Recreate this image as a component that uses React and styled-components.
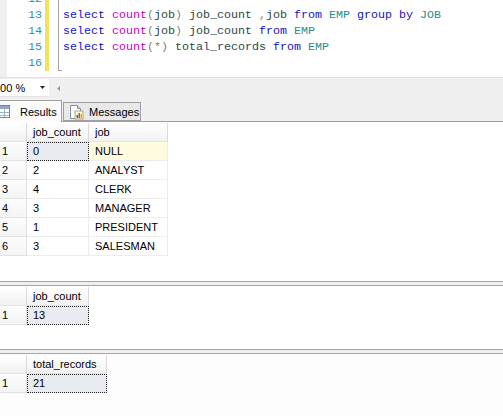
import styled, { createGlobalStyle } from "styled-components";

const GlobalStyle = createGlobalStyle`
  html, body {
    margin: 0;
    padding: 0;
    background: #ffffff;
    overflow: hidden;
  }
  * {
    box-sizing: border-box;
  }
`;

const tokenColors = {
  kw: "#1414c4",
  fn: "#cc00cc",
  op: "#808080",
  id: "#2c4a4a",
  tbl: "#2b8a8a",
};

const codeLines = [
  { n: 12, tokens: [] },
  {
    n: 13,
    tokens: [
      ["kw", "select"], ["", " "], ["fn", "count"], ["op", "("], ["id", "job"], ["op", ")"],
      ["", " "], ["id", "job_count"], ["", " "], ["op", ","], ["id", "job"], ["", " "],
      ["kw", "from"], ["", " "], ["tbl", "EMP"], ["", " "], ["kw", "group"], ["", " "],
      ["kw", "by"], ["", " "], ["tbl", "JOB"],
    ],
  },
  {
    n: 14,
    tokens: [
      ["kw", "select"], ["", " "], ["fn", "count"], ["op", "("], ["id", "job"], ["op", ")"],
      ["", " "], ["id", "job_count"], ["", " "], ["kw", "from"], ["", " "], ["tbl", "EMP"],
    ],
  },
  {
    n: 15,
    tokens: [
      ["kw", "select"], ["", " "], ["fn", "count"], ["op", "(*)"], ["", " "],
      ["id", "total_records"], ["", " "], ["kw", "from"], ["", " "], ["tbl", "EMP"],
    ],
  },
  { n: 16, tokens: [] },
];

const jobRows = [
  ["1", "0", "NULL"],
  ["2", "2", "ANALYST"],
  ["3", "4", "CLERK"],
  ["4", "3", "MANAGER"],
  ["5", "1", "PRESIDENT"],
  ["6", "3", "SALESMAN"],
];

function ResultsIcon() {
  return (
    <svg width="16" height="13" viewBox="0 0 16 13">
      <rect x="0.5" y="0.5" width="15" height="12" fill="#ffffff" stroke="#6f86a8" />
      <rect x="1" y="1" width="14" height="3" fill="#8ea6c8" />
      <path d="M1 7.5H15M1 10.5H15M5.5 4V12M10.5 4V12" stroke="#9fb0c8" />
    </svg>
  );
}

function MessagesIcon() {
  return (
    <svg width="16" height="16" viewBox="0 0 16 16">
      <path d="M2.5 1.5H9.5L12.5 4.5V14.5H2.5Z" fill="#ffffff" stroke="#7d8ea6" />
      <path d="M9.5 1.5V4.5H12.5" fill="#dfe6ef" stroke="#7d8ea6" />
      <rect x="7" y="7" width="8" height="8" fill="#fff7d8" stroke="#b9a86a" />
      <rect x="8.5" y="11" width="1.5" height="3" fill="#d93a2b" />
      <rect x="10.5" y="9" width="1.5" height="5" fill="#3a6fd0" />
      <rect x="12.5" y="10" width="1.5" height="4" fill="#e0b020" />
    </svg>
  );
}

function DataGrid({ columns, header, rows, selected, nullCell }) {
  return (
    <Grid $columns={columns}>
      <HeadCell />
      {header.map((h) => (
        <HeadCell key={h}>{h}</HeadCell>
      ))}
      {rows.map((row, r) =>
        row.map((value, c) =>
          c === 0 ? (
            <RowHead key={r + "-" + c}>{value}</RowHead>
          ) : (
            <Cell
              key={r + "-" + c}
              $selected={selected && selected[0] === r && selected[1] === c}
              $null={nullCell && value === "NULL"}
            >
              {value}
            </Cell>
          )
        )
      )}
    </Grid>
  );
}

export default function App() {
  return (
    <>
      <GlobalStyle />
      <Window>
        <Editor>
          <SelectionMargin />
          <LineNumbers>
            {codeLines.map((l) => (
              <Line key={l.n}>{l.n}</Line>
            ))}
          </LineNumbers>
          <ChangeBar />
          <OutlineColumn>
            <OutlineLine />
          </OutlineColumn>
          <Code>
            {codeLines.map((l) => (
              <Line key={l.n}>
                {l.tokens.map(([kind, text], i) => (
                  <Token key={i} $kind={kind}>
                    {text}
                  </Token>
                ))}
              </Line>
            ))}
          </Code>
        </Editor>

        <Toolbar>
          <ZoomBox>
            <span>100 %</span>
            <svg width="5" height="3" viewBox="0 0 5 3">
              <path d="M0 0H5L2.5 3Z" fill="#222" />
            </svg>
          </ZoomBox>
          <ScrollArrow>
            <svg width="3" height="5" viewBox="0 0 3 5">
              <path d="M3 0V5L0 2.5Z" fill="#9a9a9a" />
            </svg>
          </ScrollArrow>
        </Toolbar>

        <TabStrip>
          <Tab $active $width={72}>
            <ResultsIcon />
            <TabLabel $gap={10}>Results</TabLabel>
          </Tab>
          <Tab $width={78}>
            <MessagesIcon />
            <TabLabel $gap={5}>Messages</TabLabel>
          </Tab>
        </TabStrip>

        <Results>
          <Pane $height={159}>
            <DataGrid
              columns="27px 62px 79px"
              header={["job_count", "job"]}
              rows={jobRows}
              selected={[0, 1]}
              nullCell
            />
          </Pane>
          <Splitter />
          <Pane $height={63}>
            <DataGrid
              columns="27px 62px"
              header={["job_count"]}
              rows={[["1", "13"]]}
              selected={[0, 1]}
            />
          </Pane>
          <Splitter />
          <Pane $grow $tint>
            <DataGrid
              columns="27px 80px"
              header={["total_records"]}
              rows={[["1", "21"]]}
              selected={[0, 1]}
            />
          </Pane>
        </Results>
      </Window>
    </>
  );
}

const Window = styled.div`
  width: 503px;
  height: 416px;
  overflow: hidden;
  display: flex;
  flex-direction: column;
  background: #ffffff;
  font-family: "Liberation Sans", Arial, sans-serif;
  font-size: 11px;
  color: #000;
`;

const Editor = styled.div`
  height: 78px;
  flex: none;
  display: flex;
  overflow: hidden;
  background: #ffffff;
  border-bottom: 1px solid #e2e2e2;
  font-family: "Liberation Mono", "DejaVu Sans Mono", monospace;
  font-size: 11.67px;
`;

const SelectionMargin = styled.div`
  width: 7px;
  background: #f0f0f0;
`;

const LineNumbers = styled.div`
  width: 36px;
  margin-top: -9px;
  padding-right: 1px;
  text-align: right;
  color: #2b91af;
`;

const Line = styled.div`
  height: 16px;
  line-height: 16px;
  white-space: pre;
`;

const ChangeBar = styled.div`
  width: 4px;
  height: 71px;
  margin-left: 2px;
  background: #f3e35a;
`;

const OutlineColumn = styled.div`
  width: 14px;
`;

const OutlineLine = styled.div`
  margin-left: 9px;
  width: 4px;
  height: 71px;
  border-left: 1px solid #a5a5a5;
  border-bottom: 1px solid #a5a5a5;
`;

const Code = styled.div`
  flex: 1;
  margin-top: -9px;
`;

const Token = styled.span`
  color: ${(p) => tokenColors[p.$kind] || "#000"};
`;

const Toolbar = styled.div`
  height: 20px;
  flex: none;
  display: flex;
  align-items: center;
  background: #f0f0f0;
`;

const ZoomBox = styled.div`
  width: 59px;
  height: 18px;
  margin-left: -10px;
  padding: 0 4px;
  display: flex;
  align-items: center;
  justify-content: space-between;
  background: #ffffff;
  border-bottom: 1px solid #e4e4e4;
  padding-right: 4px;
`;

const ScrollArrow = styled.div`
  margin-left: 8px;
  display: flex;
  align-items: center;
`;

const TabStrip = styled.div`
  height: 24px;
  flex: none;
  display: flex;
  align-items: flex-end;
  background: #f0f0f0;
  border-bottom: 1px solid #a0a0a0;
`;

const Tab = styled.div`
  width: ${(p) => p.$width}px;
  height: ${(p) => (p.$active ? 22 : 19)}px;
  margin-left: ${(p) => (p.$active ? -10 : 1)}px;
  margin-bottom: ${(p) => (p.$active ? -1 : 0)}px;
  padding-left: ${(p) => (p.$active ? 4 : 4)}px;
  display: flex;
  align-items: center;
  background: ${(p) => (p.$active ? "#fbfbfb" : "#e9e9e9")};
  border: 1px solid #a0a0a0;
  border-bottom: ${(p) => (p.$active ? "none" : "1px solid #a0a0a0")};
  border-left: ${(p) => (p.$active ? "none" : "1px solid #a0a0a0")};
  font-size: 11px;
`;

const TabLabel = styled.span`
  margin-left: ${(p) => p.$gap}px;
`;

const Results = styled.div`
  flex: 1;
  display: flex;
  flex-direction: column;
  background: #ffffff;
`;

const Pane = styled.div`
  height: ${(p) => (p.$height ? p.$height + "px" : "auto")};
  flex: ${(p) => (p.$grow ? 1 : "none")};
  padding-top: 1px;
  background: ${(p) => (p.$tint ? "#fdfdfd" : "#ffffff")};
  overflow: hidden;
`;

const Splitter = styled.div`
  height: 5px;
  flex: none;
  background: #f0f0f0;
  border-top: 1px solid #a4a4a4;
  border-bottom: 1px solid #a4a4a4;
`;

const Grid = styled.div`
  display: grid;
  grid-template-columns: ${(p) => p.$columns};
  grid-auto-rows: 19px;
  width: max-content;
`;

const HeadCell = styled.div`
  padding-left: 6px;
  line-height: 18px;
  white-space: nowrap;
  background: linear-gradient(#ffffff, #f2f2f2);
  border-right: 1px solid #d9d9d9;
  border-bottom: 1px solid #e4e4e4;
`;

const RowHead = styled.div`
  padding-left: 2px;
  line-height: 18px;
  background: linear-gradient(#fdfdfd, #f4f4f4);
  border-right: 1px solid #e2e2e2;
  border-bottom: 1px solid #e2e2e2;
`;

const Cell = styled.div`
  padding-left: ${(p) => (p.$selected ? 5 : 6)}px;
  line-height: ${(p) => (p.$selected ? 17 : 18)}px;
  white-space: nowrap;
  background: ${(p) => (p.$selected ? "#e8ebef" : p.$null ? "#fffbdf" : "#ffffff")};
  border-right: 1px solid #ececec;
  border-bottom: 1px solid #ececec;
  ${(p) => p.$selected && "border: 1px dotted #222;"}
`;
